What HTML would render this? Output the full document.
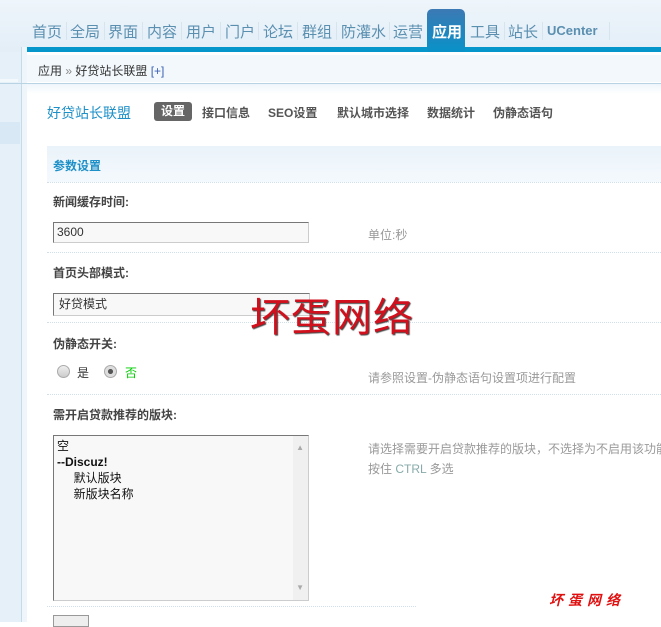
<!DOCTYPE html><html><head><meta charset="utf-8"><style>
body{margin:0;width:661px;height:622px;overflow:hidden;position:relative;background:#fff;font-family:"Liberation Sans","Noto Sans CJK SC",sans-serif;font-size:12px;color:#333}
.a{position:absolute}
.nav span{position:absolute;top:21px;font-size:15px;color:#5a8fb0}
.sep{position:absolute;top:22px;width:1px;height:18px;background:#d6e4ee}
.lbl{position:absolute;left:53px;font-weight:bold;font-size:12px;color:#444}
.dot{position:absolute;left:47px;right:0;border-top:1px dotted #cfe0ec;height:0}
.tip{position:absolute;left:368px;color:#999;font-size:12px}
.tab{position:absolute;top:104px;font-weight:bold;color:#555;font-size:12px}
</style></head><body>
<div class="a" style="left:0;top:0;width:661px;height:52px;background:linear-gradient(#eef5fb,#e3eef7)"></div>
<div class="a" style="left:0;top:52px;width:22px;height:570px;background:#e6f0f8"></div>
<div class="a" style="left:0;top:79px;width:18px;height:3px;background:#f3f8fc"></div>
<div class="a" style="left:0;top:122px;width:20px;height:22px;background:#d8e8f4"></div>
<div class="a" style="left:21px;top:47px;width:1px;height:575px;background:#c5dbea"></div>
<div class="a" style="left:22px;top:47px;width:5px;height:575px;background:#eef5fb"></div>
<div class="a" style="left:0;top:83px;width:661px;height:1px;background:#b8d3e4"></div>
<div class="a" style="left:27px;top:84px;width:634px;height:10px;background:linear-gradient(#eef5fb,#fff)"></div>
<div class="a" style="left:27px;top:47px;width:634px;height:5px;background:#0596cc"></div>
<div class="a" style="left:27px;top:55px;width:634px;height:27px;background:#f3f8fc"></div>
<div class="a" style="left:427px;top:9px;width:38px;height:43px;border-radius:5px 5px 0 0;background:linear-gradient(#3c79b4,#0892c8)"></div>
<div class="nav">
<span style="left:32px">首页</span><div class="sep" style="left:66px"></div>
<span style="left:70px">全局</span><div class="sep" style="left:104px"></div>
<span style="left:108px">界面</span><div class="sep" style="left:142px"></div>
<span style="left:147px">内容</span><div class="sep" style="left:181px"></div>
<span style="left:186px">用户</span><div class="sep" style="left:220px"></div>
<span style="left:225px">门户</span><div class="sep" style="left:258px"></div>
<span style="left:263px">论坛</span><div class="sep" style="left:297px"></div>
<span style="left:302px">群组</span><div class="sep" style="left:336px"></div>
<span style="left:341px">防灌水</span><div class="sep" style="left:389px"></div>
<span style="left:393px">运营</span>
<span style="left:432px;color:#fff;font-weight:bold">应用</span>
<span style="left:470px">工具</span><div class="sep" style="left:504px"></div>
<span style="left:508px">站长</span><div class="sep" style="left:542px"></div>
<span style="left:547px;font-size:13px;top:23px;font-weight:bold">UCenter</span><div class="sep" style="left:609px"></div>
</div>
<div class="a" style="left:38px;top:62px;color:#333">应用 <span style="color:#888">»</span> 好贷站长联盟 <span style="color:#3a5fb4">[+]</span></div>
<div class="a" style="left:47px;top:103px;font-size:14px;color:#1e90c8">好贷站长联盟</div>
<div class="a" style="left:154px;top:102px;width:38px;height:19px;background:#666;border-radius:3px;color:#fff;font-weight:bold;text-align:center;line-height:19px">设置</div>
<div class="tab" style="left:202px">接口信息</div>
<div class="tab" style="left:268px">SEO设置</div>
<div class="tab" style="left:337px">默认城市选择</div>
<div class="tab" style="left:427px">数据统计</div>
<div class="tab" style="left:493px">伪静态语句</div>
<div class="a" style="left:47px;top:146px;width:614px;height:36px;background:linear-gradient(#eaf3fa,#f4f9fd)"></div>
<div class="a" style="left:53px;top:157px;font-weight:bold;color:#1e90c8">参数设置</div>
<div class="dot" style="top:182px"></div>
<div class="lbl" style="top:193px">新闻缓存时间:</div>
<div class="a" style="left:53px;top:222px;height:19px;border:1px solid #777;border-color:#777 #ccc #ccc #777;background:#f8f8f8;line-height:19px;padding-left:3px;width:251px">3600</div>
<div class="tip" style="top:226px">单位:秒</div>
<div class="dot" style="top:252px"></div>
<div class="lbl" style="top:264px">首页头部模式:</div>
<div class="a" style="left:53px;top:293px;width:250px;height:21px;border:1px solid #777;border-color:#777 #ccc #ccc #777;background:#f8f8f8;line-height:21px;padding-left:5px">好贷模式</div>
<div class="dot" style="top:322px"></div>
<div class="lbl" style="top:335px">伪静态开关:</div>
<div class="a" style="left:57px;top:365px;width:11px;height:11px;border-radius:50%;border:1px solid #aaa;background:linear-gradient(#eee,#ccc)"></div>
<div class="a" style="left:77px;top:364px">是</div>
<div class="a" style="left:104px;top:365px;width:11px;height:11px;border-radius:50%;border:1px solid #aaa;background:radial-gradient(#555 30%,#ddd 35%)"></div>
<div class="a" style="left:125px;top:364px;color:#0c0">否</div>
<div class="tip" style="top:369px">请参照设置-伪静态语句设置项进行配置</div>
<div class="dot" style="top:394px"></div>
<div class="lbl" style="top:406px">需开启贷款推荐的版块:</div>
<div class="a" style="left:53px;top:435px;width:254px;height:164px;border:1px solid #777;border-color:#777 #ccc #ccc #777;background:#f8f8f8;line-height:16px;color:#111;font-size:12px">
<div style="padding:2px 3px">空<br><b>--Discuz!</b><br>&nbsp;&nbsp;&nbsp;&nbsp;&nbsp;默认版块<br>&nbsp;&nbsp;&nbsp;&nbsp;&nbsp;新版块名称</div>
<div class="a" style="right:0;top:0;width:15px;height:164px;background:#f0f0f0"></div>
<div class="a" style="right:4px;top:4px;color:#aaa;font-size:8px">▲</div>
<div class="a" style="right:4px;bottom:4px;color:#aaa;font-size:8px">▼</div>
</div>
<div class="tip" style="top:440px;white-space:nowrap">请选择需要开启贷款推荐的版块，不选择为不启用该功能</div>
<div class="tip" style="top:460px">按住 <span style="color:#8aa">CTRL</span> 多选</div>
<div class="dot" style="top:606px;right:245px"></div>
<div class="a" style="left:53px;top:615px;width:34px;height:10px;border:1px solid #999;background:#eee"></div>
<div class="a" style="left:250px;top:285px;font-size:40px;color:#d0101c;text-shadow:1px 1px 1px #444;letter-spacing:1px">坏蛋网络</div>
<div class="a" style="left:549px;top:590px;font-size:14px;color:#e01010;font-style:italic;font-weight:bold;letter-spacing:5px">坏蛋网络</div>
</body></html>
